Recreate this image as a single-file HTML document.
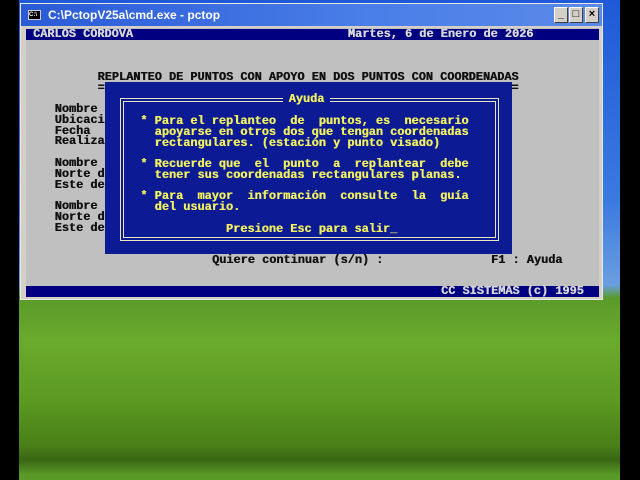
<!DOCTYPE html>
<html><head><meta charset="utf-8"><style>
*{margin:0;padding:0;box-sizing:border-box}
body{width:640px;height:480px;overflow:hidden;background:#000;position:relative;font-family:"Liberation Mono",monospace}
.bg{position:absolute;left:19px;top:0;width:601px;height:480px;background:linear-gradient(#1f5ad8 0px,#3a7ae0 200px,#6a9ee0 285px,#5a9a2a 298px,#6aaa2c 340px,#5c9a22 400px,#4a8018 445px,#3a6614 460px,#5a9a28 475px)}
.win{position:absolute;left:20px;top:3px;width:583px;height:297px;background:#d4d0c8;border:1px solid #e8e8e8}
.title{position:absolute;left:0;top:0;width:581px;height:22px;background:linear-gradient(90deg,#2a5ad6,#4a7ee8 60%,#5a8ae8);color:#fff;font:bold 12px "Liberation Sans",sans-serif;line-height:22px;padding-left:27px}
.ico{position:absolute;left:7px;top:6px;width:13px;height:10px;background:#000;border:1px solid #ccc;color:#fff;font-size:6px;line-height:8px}
.btn{position:absolute;top:3px;width:14px;height:16px;background:#d4d0c8;border:1px solid;border-color:#fff #404040 #404040 #fff;color:#000;font:bold 11px "Liberation Sans",sans-serif;text-align:center;line-height:13px}
.con{position:absolute;left:5px;top:24px;width:573px;height:269px;background:#c0c0c0;overflow:hidden}
.r{position:absolute;left:0;height:10.75px;font-size:11.9px;font-weight:bold;line-height:10.75px;white-space:pre;color:#101010;text-shadow:0.4px 0 0 currentColor}
.bar{position:absolute;left:0;width:573px;height:11px;background:#000080}
.bar .r{color:#d8d8d8}
.dlg{position:absolute;left:78.6px;top:54px;width:407.5px;height:172px;background:#0c1a94}
.box{position:absolute;left:15px;top:16px;width:379px;height:143px;border:4px double #e8e4c0}
.y{color:#f0f060}
.tt{position:absolute;top:12px;left:178px;background:#0c1a94;padding:0 6px;color:#f0f060}
</style></head><body>
<div class="bg"></div>
<div class="win">
 <div class="title"><div class="ico">C:\</div>C:\PctopV25a\cmd.exe - pctop
  <div class="btn" style="left:533px">_</div><div class="btn" style="left:548px">□</div><div class="btn" style="left:564px">×</div>
 </div>
 <div class="con">
  <div class="bar" style="top:1px"><div class="r" style="left:7px;top:0">CARLOS CORDOVA</div><div class="r" style="left:321.8px;top:0">Martes, 6 de Enero de 2026</div></div>
  <div class="r" style="top:44px;left:71.5px">REPLANTEO DE PUNTOS CON APOYO EN DOS PUNTOS CON COORDENADAS</div>
  <div class="r" style="top:55px;left:71.5px">===========================================================</div>
  <div class="r" style="top:76px;left:28.6px">Nombre
Ubicaci
Fecha
Realiza</div>
  <div class="r" style="top:130px;left:28.6px">Nombre
Norte d
Este de</div>
  <div class="r" style="top:173px;left:28.6px">Nombre
Norte d
Este de</div>
  <div class="r" style="top:227px;left:186px">Quiere continuar (s/n) :</div>
  <div class="r" style="top:227px;left:465px">F1 : Ayuda</div>
  <div class="bar" style="top:258px"><div class="r" style="left:415px;top:0">CC SISTEMAS (c) 1995</div></div>
  <div class="dlg">
   <div class="box"></div>
   <div class="r tt">Ayuda</div>
   <div class="r y" style="top:34px;left:35.7px">* Para el replanteo  de  puntos, es  necesario
  apoyarse en otros dos que tengan coordenadas
  rectangulares. (estación y punto visado)

* Recuerde que  el  punto  a  replantear  debe
  tener sus coordenadas rectangulares planas.

* Para  mayor  información  consulte  la  guía
  del usuario.

            Presione Esc para salir_</div>
  </div>
 </div>
</div>
</body></html>
